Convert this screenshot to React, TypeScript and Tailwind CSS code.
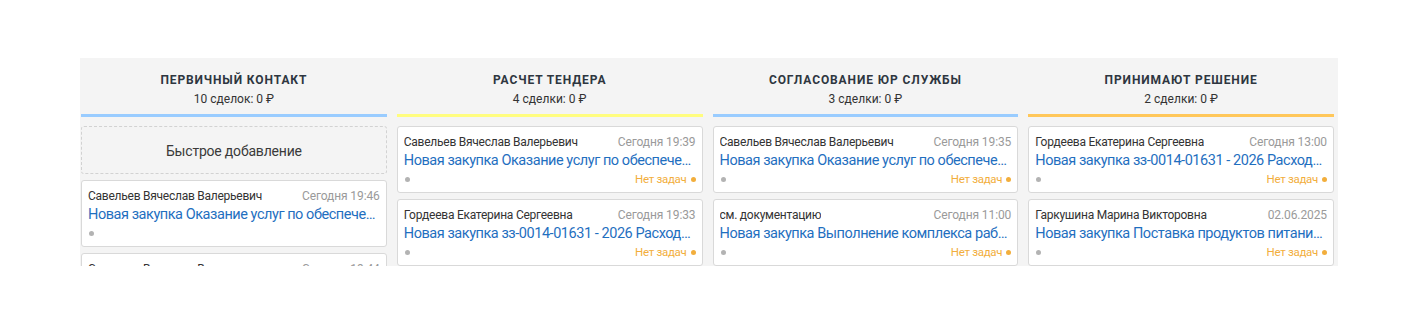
import React from "react";

type Card = { name: string; date: string; title: string; tasks: boolean };
type Col = { title: string; sub: string; line: string; quick?: boolean; cards: Card[] };

const cols: Col[] = [
  {
    title: "Первичный контакт",
    sub: "10 сделок: 0 ₽",
    line: "bg-[#99ccff]",
    quick: true,
    cards: [
      { name: "Савельев Вячеслав Валерьевич", date: "Сегодня 19:46", title: "Новая закупка Оказание услуг по обеспечению", tasks: false },
      { name: "Савельев Вячеслав Валерьевич", date: "Сегодня 19:44", title: "Новая закупка Оказание услуг по обеспечению", tasks: false },
    ],
  },
  {
    title: "Расчет тендера",
    sub: "4 сделки: 0 ₽",
    line: "bg-[#fffd7f]",
    cards: [
      { name: "Савельев Вячеслав Валерьевич", date: "Сегодня 19:39", title: "Новая закупка Оказание услуг по обеспечению", tasks: true },
      { name: "Гордеева Екатерина Сергеевна", date: "Сегодня 19:33", title: "Новая закупка зз-0014-01631 - 2026 Расходные", tasks: true },
    ],
  },
  {
    title: "Согласование юр службы",
    sub: "3 сделки: 0 ₽",
    line: "bg-[#99ccff]",
    cards: [
      { name: "Савельев Вячеслав Валерьевич", date: "Сегодня 19:35", title: "Новая закупка Оказание услуг по обеспечению", tasks: true },
      { name: "см. документацию", date: "Сегодня 11:00", title: "Новая закупка Выполнение комплекса работ", tasks: true },
    ],
  },
  {
    title: "Принимают решение",
    sub: "2 сделки: 0 ₽",
    line: "bg-[#ffc75a]",
    cards: [
      { name: "Гордеева Екатерина Сергеевна", date: "Сегодня 13:00", title: "Новая закупка зз-0014-01631 - 2026 Расходные", tasks: true },
      { name: "Гаркушина Марина Викторовна", date: "02.06.2025", title: "Новая закупка Поставка продуктов питания для", tasks: true },
    ],
  },
];

function LeadCard({ c }: { c: Card }) {
  return (
    <div className="h-[67px] shrink-0 rounded-[3px] border border-[#d9d9d9] bg-white px-[6px] pt-[7px] pb-[5px] flex flex-col">
      <div className="flex h-[17px] items-center justify-between text-[12px] leading-[17px]">
        <span className="truncate tracking-[-0.25px] text-[#333333]">{c.name}</span>
        <span className="shrink-0 pl-2 tracking-[-0.1px] text-[#9a9a9a]">{c.date}</span>
      </div>
      <div className="h-[19px] truncate text-[14.5px] leading-[19px] tracking-[-0.45px] text-[#1f6fbf]">{c.title}</div>
      <div className="mt-[2px] flex h-[16px] items-center justify-between">
        <span className="ml-[1px] h-[5px] w-[5px] rounded-full bg-[#b3b3b3]" />
        {c.tasks && (
          <span className="flex items-center gap-[4px] text-[11.5px] leading-[16px] tracking-[-0.3px] text-[#f2ae3c]">
            Нет задач
            <span className="h-[5px] w-[5px] rounded-full bg-[#f2ae3c]" />
          </span>
        )}
      </div>
    </div>
  );
}

export default function App() {
  return (
    <div className="h-[320px] w-[1418px] bg-white pt-[58px] pl-[80px]" style={{ fontFamily: "Roboto, 'Noto Sans', sans-serif" }}>
      <div className="h-[208px] w-[1258px] overflow-hidden bg-[#f4f4f4] pl-[1px] pr-[4px]">
        <div className="grid grid-cols-4 gap-x-[10px]">
          {cols.map((col) => (
            <div key={col.title} className="flex flex-col">
              <div className="flex flex-col items-center pt-[14px] pb-[7px]">
                <div className="h-[16px] text-[12px] font-bold uppercase leading-[16px] tracking-[0.9px] text-[#2e3640]">
                  {col.title}
                </div>
                <div className="mt-[3px] h-[16px] text-[12px] leading-[16px] text-[#333333]">{col.sub}</div>
              </div>
              <div className={`h-[3px] ${col.line}`} />
              <div className="mt-[9px] flex flex-col gap-[6px]">
                {col.quick && (
                  <div className="flex h-[48px] items-center justify-center rounded-[3px] border border-dashed border-[#d2d2d2] pt-[3px] text-[14px] tracking-[-0.2px] text-[#3a3a3a]">
                    Быстрое добавление
                  </div>
                )}
                {col.cards.map((c, i) => (
                  <LeadCard key={i} c={c} />
                ))}
              </div>
            </div>
          ))}
        </div>
      </div>
    </div>
  );
}
